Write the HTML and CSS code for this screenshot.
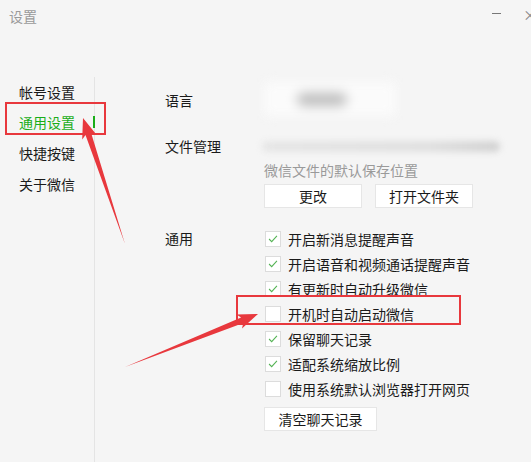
FILE: index.html
```html
<!DOCTYPE html>
<html lang="zh">
<head>
<meta charset="utf-8">
<link rel="stylesheet" href="styles.css">
</head>
<body>
<div class="window">
  <div class="titlebar">
    <span class="title">设置</span>
    <div class="controls">
      <span class="min"></span>
      <span class="close">×</span>
    </div>
  </div>
  <div class="main">
    <nav class="sidebar">
      <div class="nav-item">帐号设置</div>
      <div class="nav-item active">通用设置</div>
      <div class="nav-item">快捷按键</div>
      <div class="nav-item">关于微信</div>
    </nav>
    <section class="content">
      <div class="row row-lang">
        <div class="label">语言</div>
        <div class="ctrl">
          <div class="lang-box"><span class="blob"></span></div>
        </div>
      </div>
      <div class="row row-files">
        <div class="label">文件管理</div>
        <div class="ctrl">
          <div class="path"></div>
          <div class="hint">微信文件的默认保存位置</div>
          <div class="btns">
            <button class="btn">更改</button>
            <button class="btn">打开文件夹</button>
          </div>
        </div>
      </div>
      <div class="row row-general">
        <div class="label">通用</div>
        <div class="ctrl">
          <label class="check"><span class="box on"><svg viewBox="0 0 16 16"><polyline points="3.5,8 6.5,11 12.5,4.5"/></svg></span>开启新消息提醒声音</label>
          <label class="check"><span class="box on"><svg viewBox="0 0 16 16"><polyline points="3.5,8 6.5,11 12.5,4.5"/></svg></span>开启语音和视频通话提醒声音</label>
          <label class="check"><span class="box on"><svg viewBox="0 0 16 16"><polyline points="3.5,8 6.5,11 12.5,4.5"/></svg></span>有更新时自动升级微信</label>
          <label class="check"><span class="box"></span>开机时自动启动微信</label>
          <label class="check"><span class="box on"><svg viewBox="0 0 16 16"><polyline points="3.5,8 6.5,11 12.5,4.5"/></svg></span>保留聊天记录</label>
          <label class="check"><span class="box on"><svg viewBox="0 0 16 16"><polyline points="3.5,8 6.5,11 12.5,4.5"/></svg></span>适配系统缩放比例</label>
          <label class="check"><span class="box"></span>使用系统默认浏览器打开网页</label>
          <button class="btn btn-clear">清空聊天记录</button>
        </div>
      </div>
    </section>
  </div>
  <div class="mark mark-nav"></div>
  <div class="mark mark-auto"></div>
  <svg class="arrows" viewBox="0 0 531 462" width="531" height="462">
    <polygon points="125,244 91.2,133.2 96.5,134.8 83,118 82.2,139.6 85.5,135.1"/>
    <polygon points="125,367 243.3,323.1 242,328.4 258,314 236.5,314.5 241.1,317.5"/>
  </svg>
</div>
</body>
</html>
```
FILE: styles.css
```css
* { box-sizing: border-box; }
html, body { margin: 0; padding: 0; }
body {
  width: 531px;
  height: 462px;
  overflow: hidden;
  background: #f5f5f5;
  font-family: "Noto Sans CJK SC", "Microsoft YaHei", sans-serif;
  font-size: 14px;
  color: #1a1a1a;
}
.window { position: relative; width: 531px; height: 462px; }
.titlebar {
  height: 77px;
  display: flex;
  justify-content: space-between;
  align-items: flex-start;
  padding: 6px 0 0 9px;
}
.title { color: #9a9a9a; font-size: 14px; line-height: 20px; }
.controls { display: flex; align-items: flex-start; gap: 22px; margin-right: -6px; }
.min { width: 9px; height: 1px; background: #777; margin-top: 7px; }
.close { color: #888; font-size: 14px; line-height: 16px; margin-top: 0; }
.main { display: flex; height: 385px; }
.sidebar {
  width: 95px;
  border-right: 1px solid #e4e4e4;
}
.nav-item {
  position: relative;
  height: 31px;
  line-height: 31px;
  padding-left: 19px;
  color: #1a1a1a;
}
.nav-item:first-child { height: 30px; line-height: 30px; }
.nav-item.active { color: #1aad19; }
.nav-item.active::after {
  content: "";
  position: absolute;
  right: -1px;
  top: 9px;
  width: 2px;
  height: 12px;
  background: #1aad19;
}
.content { flex: 1; padding-left: 70px; }
.row { display: flex; }
.label { width: 99px; flex: none; line-height: 20px; }
.ctrl { display: flex; flex-direction: column; align-items: flex-start; }
.row-lang { margin-top: 7px; height: 32px; }
.row-lang .label { line-height: 32px; }
.lang-box {
  width: 132px;
  height: 34px;
  margin-top: -2px;
  background: #fbfbfb;
  filter: blur(6px);
  display: flex;
  align-items: center;
  padding-left: 33px;
}
.blob { width: 50px; height: 13px; border-radius: 7px; background: #bcbcbc; }
.row-files { margin-top: 20px; }
.path {
  width: 238px;
  height: 11px;
  margin: 5px 0 6px -2px;
  background: linear-gradient(90deg, #e6e6e6, #e0e0e0 70%, #d2d2d2);
  border-radius: 6px;
  filter: blur(3px);
}
.hint { color: #9a9a9a; line-height: 20px; height: 20px; margin-top: 2px; }
.btns { display: flex; gap: 13px; margin-top: 4px; }
.btn {
  font: inherit;
  color: #1a1a1a;
  background: #fff;
  border: 1px solid #e6e6e6;
  height: 24px;
  width: 98px;
  padding: 0;
  line-height: 22px;
  text-align: center;
}
.row-general { margin-top: 18px; }
.row-general .label { line-height: 25px; }
.check {
  display: flex;
  align-items: center;
  height: 25px;
  gap: 7px;
  margin-left: 1px;
}
.box {
  width: 16px;
  height: 16px;
  background: #fff;
  border: 1px solid #dcdcdc;
  display: flex;
}
.box svg { width: 14px; height: 14px; }
.box polyline { fill: none; stroke: #55b455; stroke-width: 1.25; }
.btn-clear { width: 113px; margin-top: 6px; }
.mark {
  position: absolute;
  border: 2px solid #e8383d;
}
.mark-nav { left: 5px; top: 102px; width: 101px; height: 33px; }
.mark-auto { left: 236px; top: 295px; width: 225px; height: 30px; }
.arrows { position: absolute; left: 0; top: 0; pointer-events: none; }
.arrows polygon { fill: #e8383d; }
```
